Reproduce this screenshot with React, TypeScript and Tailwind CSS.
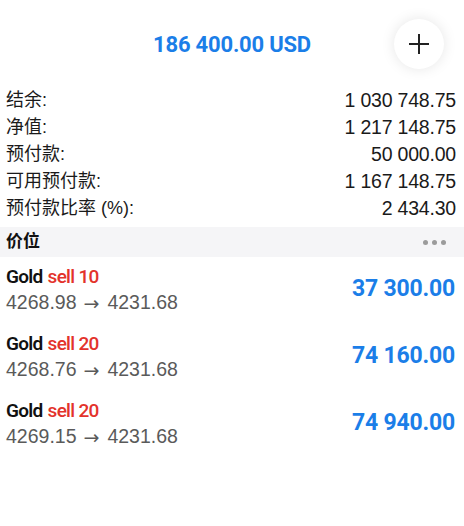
import React from "react";

const cjk = { fontFamily: '"Liberation Sans", "Noto Sans CJK SC", sans-serif' };
const cond = { fontFamily: 'Roboto, "Noto Sans CJK SC", sans-serif' };

const summary: [string, string][] = [
  ["结余:", "1 030 748.75"],
  ["净值:", "1 217 148.75"],
  ["预付款:", "50 000.00"],
  ["可用预付款:", "1 167 148.75"],
  ["预付款比率 (%):", "2 434.30"],
];

const positions = [
  { qty: "10", from: "4268.98", to: "4231.68", profit: "37 300.00" },
  { qty: "20", from: "4268.76", to: "4231.68", profit: "74 160.00" },
  { qty: "20", from: "4269.15", to: "4231.68", profit: "74 940.00" },
];

export default function App() {
  return (
    <div className="w-[464px] h-[526px] bg-white overflow-hidden" style={cjk}>
      <div className="relative h-[88px] flex items-center justify-center">
        <div className="text-[22px] font-bold text-[#1b7ee8] tracking-[-0.2px]" style={cond}>
          186 400.00 USD
        </div>
        <div className="absolute left-[394px] top-[19px] w-[50px] h-[50px] rounded-full bg-white shadow-[0_0_14px_rgba(0,0,0,0.10)] flex items-center justify-center">
          <svg width="22" height="22" viewBox="0 0 22 22">
            <path d="M11 1v20M1 11h20" stroke="#222" strokeWidth="2" />
          </svg>
        </div>
      </div>
      <div className="pl-[6px] pr-[8px] mt-[-1px]">
        {summary.map(([k, v]) => (
          <div key={k} className="flex justify-between h-[27px] items-center text-[#1a1a1a]">
            <span className="text-[18px]">{k}</span>
            <span className="text-[19.5px] tracking-[-0.2px]">{v}</span>
          </div>
        ))}
      </div>
      <div className="mt-[5px] h-[30px] bg-[#f5f5f7] flex items-center justify-between pl-[6px] pr-[18px]">
        <span className="text-[17px] font-bold text-[#111]">价位</span>
        <div className="flex gap-[4px]">
          <span className="w-[5px] h-[5px] rounded-full bg-[#9b9b9b]" />
          <span className="w-[5px] h-[5px] rounded-full bg-[#9b9b9b]" />
          <span className="w-[5px] h-[5px] rounded-full bg-[#9b9b9b]" />
        </div>
      </div>
      <div className="pl-[6px] pr-[9px]">
        {positions.map((p, i) => (
          <div key={i} className="flex items-center justify-between h-[67px]">
            <div className="flex flex-col">
              <div className="h-[25px] flex items-center text-[19px] font-semibold tracking-[-0.7px]" style={cond}>
                <span className="text-[#111]">Gold</span>
                <span className="text-[#e3322b] font-medium ml-[5px]">sell {p.qty}</span>
              </div>
              <div className="h-[27px] flex items-center text-[19.5px] text-[#5a5a5a]">
                {p.from}
                <span className="ml-[7px] mr-[8px] text-[19px]" style={{ fontFamily: '"DejaVu Sans", sans-serif' }}>→</span>
                {p.to}
              </div>
            </div>
            <div className="text-[23px] font-bold text-[#1b7ee8] tracking-[-0.2px] mt-[-3px]" style={cond}>
              {p.profit}
            </div>
          </div>
        ))}
      </div>
    </div>
  );
}
